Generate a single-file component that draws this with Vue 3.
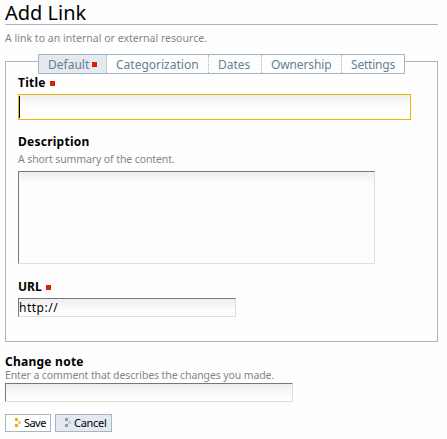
<script setup>
import { ref } from 'vue'

const tabs = [
  { id: 'default', label: 'Default', required: true },
  { id: 'categorization', label: 'Categorization' },
  { id: 'dates', label: 'Dates' },
  { id: 'ownership', label: 'Ownership' },
  { id: 'settings', label: 'Settings' },
]
const active = ref('default')
</script>

<template>
  <main class="page">
    <h1><span>Add Link</span></h1>
    <p class="lead"><span>A link to an internal or external resource.</span></p>

    <section class="panel">
      <nav class="tabs">
        <a
          v-for="tab in tabs"
          :key="tab.id"
          :class="['tab', tab.id, { active: tab.id === active }]"
          @click="active = tab.id"
        ><span>{{ tab.label }}</span><i v-if="tab.required" class="required"></i></a>
      </nav>

      <div class="label title-label"><span>Title</span><i class="required"></i></div>
      <div class="field title-field"><i class="caret"></i></div>

      <div class="label description-label"><span>Description</span></div>
      <p class="help"><span>A short summary of the content.</span></p>
      <div class="field description-field"></div>

      <div class="label url-label"><span>URL</span><i class="required"></i></div>
      <div class="field url-field"><span>http://</span></div>
    </section>

    <div class="label note-label"><span>Change note</span></div>
    <p class="help note-help"><span>Enter a comment that describes the changes you made.</span></p>
    <div class="field note-field"></div>

    <div class="actions">
      <button class="save">
        <svg width="6" height="9" viewBox="0 0 6 9" shape-rendering="crispEdges">
          <path d="M0 0h3v3H0zM0 6h3v3H0z" fill="#e8b10c" />
          <path d="M3 3h3v3H3z" fill="#f2d487" />
        </svg>
        <span>Save</span>
      </button>
      <button class="cancel">
        <svg width="6" height="9" viewBox="0 0 6 9" shape-rendering="crispEdges">
          <path d="M0 0h3v3H0zM0 6h3v3H0z" fill="#8ba1b1" />
          <path d="M3 3h3v3H3z" fill="#c3cfd9" />
        </svg>
        <span>Cancel</span>
      </button>
    </div>
  </main>
</template>

<style>
body {
  margin: 0;
  background: #fefefe;
}
</style>

<style scoped>
.page {
  box-sizing: border-box;
  width: 447px;
  height: 439px;
  padding: 0 9px 0 5px;
  font-family: "Noto Sans", "Open Sans", sans-serif;
  color: #000;
  white-space: nowrap;
}
h1 {
  margin: 0;
  height: 24px;
  border-bottom: 1px solid #a5b7c5;
  font-size: 20px;
  font-weight: 400;
  line-height: 26px;
}
p {
  margin: 0;
}
.lead,
.help {
  height: 16px;
  font-size: 10.5px;
  line-height: 16px;
  color: #858585;
}
.lead {
  margin-top: 5px;
  letter-spacing: 0.02px;
}
.help {
  letter-spacing: -0.11px;
}
.panel {
  box-sizing: border-box;
  height: 281px;
  margin-top: 15px;
  padding: 0 12px;
  border: 1px solid #a5b7c5;
}
.tabs {
  display: flex;
  box-sizing: border-box;
  width: 367px;
  height: 20px;
  margin: -8px 0 1px 20px;
  border: 1px solid #a5b7c5;
  background: #fefefe;
}
.tab {
  display: flex;
  box-sizing: border-box;
  align-items: center;
  padding-left: 9px;
  border-right: 1px dotted #a5b7c5;
  font-size: 12px;
  line-height: 17px;
  color: #65808f;
  cursor: pointer;
}
.tab:last-child {
  border-right: 0;
}
.tab.active {
  background: #e4eaef;
}
.tab.default { width: 68px; }
.tab.categorization { width: 102px; }
.tab.dates { width: 53px; }
.tab.ownership {
  width: 80px;
  letter-spacing: -0.12px;
}
.tab.settings {
  width: 62px;
  letter-spacing: -0.2px;
}
.required {
  flex: none;
  align-self: flex-start;
  width: 5px;
  height: 5px;
  margin: 6px 0 0 4px;
  background: #dd1f05;
}
.tab .required {
  margin: 7px 0 0 3px;
}
.label {
  display: flex;
  align-items: center;
  height: 16px;
  font-size: 12px;
  font-weight: 700;
  line-height: 16px;
  letter-spacing: 0.25px;
}
.field {
  box-sizing: border-box;
  height: 19px;
  border: 1px solid #dfdfdf;
  border-top-color: #777;
  border-left-color: #777;
  background: linear-gradient(#efefef, #fefefe 13px);
  font-size: 12px;
  line-height: 17px;
}
.title-field {
  width: 393px;
  height: 26px;
  margin-top: 3px;
  padding-top: 1px;
  border-color: #e8b10c;
}
.caret {
  display: block;
  width: 1px;
  height: 22px;
  background: #000;
}
.description-label {
  margin-top: 14px;
}
.panel .help {
  margin-top: 1px;
}
.description-field {
  width: 357px;
  height: 93px;
  margin-top: 4px;
}
.url-label {
  margin-top: 15px;
  letter-spacing: 0;
}
.url-field {
  width: 218px;
  margin-top: 3px;
  letter-spacing: 0.5px;
}
.note-label {
  margin-top: 12px;
}
.note-help {
  height: 14px;
  margin-top: -2px;
  line-height: 14px;
}
.note-field {
  width: 288px;
  margin-top: 1px;
}
.actions {
  display: flex;
  gap: 4px;
  margin-top: 12px;
}
button {
  display: flex;
  box-sizing: border-box;
  align-items: center;
  gap: 3px;
  height: 18px;
  padding: 0 0 0 9px;
  border: 1px solid #a5b7c5;
  background: #fefefe;
  font: 11px/16px "Noto Sans", "Open Sans", sans-serif;
  letter-spacing: -0.3px;
  color: #000;
}
button svg {
  flex: none;
  align-self: flex-start;
  margin-top: 3px;
}
.save {
  width: 46px;
  letter-spacing: -0.55px;
}
.cancel {
  width: 57px;
  background: #e4eaef;
}
</style>
